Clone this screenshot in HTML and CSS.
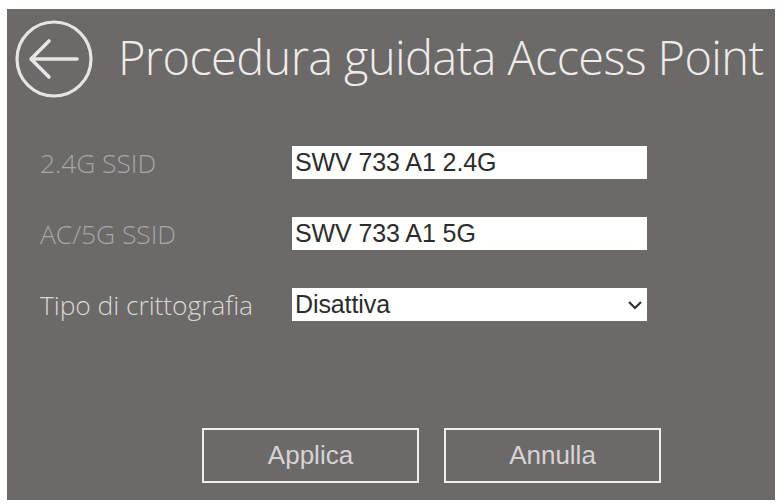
FILE: index.html
```html
<!DOCTYPE html>
<html lang="it">

<head>
    <meta charset="UTF-8">
    <meta name="viewport" content="width=device-width, initial-scale=1.0">
    <title>Procedura guidata Access Point</title>
    <link rel="stylesheet" href="styles.css">
</head>

<body>
    <div class="wizard">
        <div class="header">
            <a href="javascript:;" class="backbtn">
                <svg width="80" height="80" viewBox="0 0 80 80">
                    <circle cx="40" cy="40" r="37" fill="none" stroke="#e6e4e4" stroke-width="3.2"/>
                    <path d="M17 40 H63 M35 22 L17 40 L35 58" fill="none" stroke="#e6e4e4" stroke-width="3.6" stroke-linecap="round" stroke-linejoin="round"/>
                </svg>
            </a>
            <h1>Procedura guidata Access Point</h1>
        </div>

        <div class="form">
            <label class="dim">2.4G SSID</label>
            <div class="field">SWV 733 A1 2.4G</div>

            <label class="dim">AC/5G SSID</label>
            <div class="field">SWV 733 A1 5G</div>

            <label>Tipo di crittografia</label>
            <div class="field select">
                <span>Disattiva</span>
                <svg width="16" height="10" viewBox="0 0 16 10">
                    <path d="M2 2 L8 8 L14 2" fill="none" stroke="#333" stroke-width="2.2"/>
                </svg>
            </div>
        </div>

        <div class="buttons">
            <a href="javascript:;" class="btn">Applica</a>
            <a href="javascript:;" class="btn">Annulla</a>
        </div>
    </div>
</body>

</html>
```

FILE: styles.css
```css
* {
    margin: 0px;
    padding: 0px;
    box-sizing: border-box;
}

body {
    background-color: #fff;
}

.wizard {
    width: 768px;
    height: 491px;
    margin: 9px 0 0 7px;
    background-color: #6c6969;
    display: flex;
    flex-direction: column;
}

.header {
    display: flex;
    align-items: center;
    height: 100px;
    padding: 0 0 0 7px;
}

.backbtn {
    display: block;
    width: 80px;
    height: 80px;
}

.header h1 {
    margin-left: 24px;
    font-family: "Open Sans", sans-serif;
    font-weight: 300;
    font-size: 47px;
    color: #eeeceb;
    letter-spacing: -0.65px;
    margin-top: -5px;
    white-space: nowrap;
}

.form {
    display: grid;
    grid-template-columns: 252px 355px;
    grid-auto-rows: 33px;
    row-gap: 38px;
    padding: 37px 0 0 33px;
    align-items: center;
}

.form label {
    font-family: "Open Sans", sans-serif;
    font-weight: 300;
    font-size: 26.5px;
    color: #d9d7d7;
    letter-spacing: -0.1px;
}

.form label.dim {
    color: #a8a6a6;
}

.field {
    height: 33px;
    background-color: #fff;
    font-family: "Liberation Sans", Arial, sans-serif;
    font-size: 25px;
    line-height: 33px;
    color: #2c2c2c;
    padding: 0 0 0 3px;
    letter-spacing: -0.1px;
}

.select {
    display: flex;
    justify-content: space-between;
    align-items: center;
    padding: 0 4px 0 3px;
}

.buttons {
    display: flex;
    gap: 25px;
    margin-top: auto;
    padding: 0 0 17px 195px;
}

.btn {
    display: block;
    width: 217px;
    height: 55px;
    border: 2px solid #efeded;
    text-align: center;
    line-height: 51px;
    font-family: "Liberation Sans", Arial, sans-serif;
    font-size: 26px;
    color: #d6d4d4;
    text-decoration: none;
}
```
